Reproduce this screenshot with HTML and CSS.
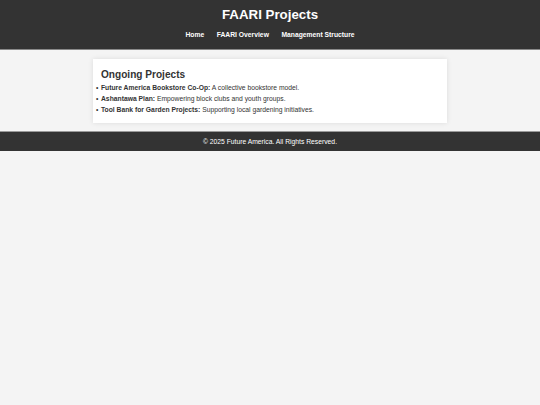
FILE: index.html
```html
<!DOCTYPE html>
<html lang="en">
<head>
<meta charset="utf-8">
<title>FAARI Projects</title>
<link rel="stylesheet" href="styles.css">
</head>
<body>
<header class="site-header">
  <h1 class="site-title">FAARI Projects</h1>
  <nav class="site-nav">
    <a href="#">Home</a>
    <a href="#">FAARI Overview</a>
    <a href="#">Management Structure</a>
  </nav>
</header>
<main class="content">
  <section class="card">
    <h2 class="card-title">Ongoing Projects</h2>
    <ul class="project-list">
      <li><strong>Future America Bookstore Co-Op:</strong> A collective bookstore model.</li>
      <li><strong>Ashantawa Plan:</strong> Empowering block clubs and youth groups.</li>
      <li><strong>Tool Bank for Garden Projects:</strong> Supporting local gardening initiatives.</li>
    </ul>
  </section>
</main>
<footer class="site-footer">&copy; 2025 Future America. All Rights Reserved.</footer>
</body>
</html>
```
FILE: styles.css
```css
html, body {
  margin: 0;
  padding: 0;
}
body {
  background: #f4f4f4;
  font-family: "Liberation Sans", Arial, sans-serif;
  font-size: 6.75px;
  line-height: 1.6;
  color: #333;
}
.site-header {
  background: #333;
  color: #fff;
  text-align: center;
  padding: 6px 0 9px;
  border-bottom: 1px solid #8a8a8a;
  height: 34px;
}
.site-title {
  margin: 0;
  font-size: 13.3px;
  line-height: 18px;
  font-weight: bold;
}
.site-nav {
  margin-top: 6px;
  line-height: 10px;
  display: flex;
  justify-content: center;
  gap: 12.5px;
}
.site-nav a {
  color: #fff;
  text-decoration: none;
  font-weight: bold;
}
.content {
  padding: 9px 0 8px;
}
.card {
  width: 338px;
  margin: 0 auto;
  background: #fff;
  padding: 9px 8px 8px;
  box-shadow: 0 0 5px rgba(0, 0, 0, 0.1);
}
.card-title {
  margin: 0;
  font-size: 10.1px;
  line-height: 14px;
  color: #333;
}
.project-list {
  margin: 0;
  padding-left: 0;
  line-height: 11px;
  list-style: none;
}
.project-list li::before {
  content: "\2022";
  display: inline-block;
  width: 5px;
  margin-left: -5px;
}
.site-footer {
  background: #333;
  color: #fff;
  text-align: center;
  border-top: 1px solid #9a9a9a;
  height: 19px;
  line-height: 19px;
}
```
